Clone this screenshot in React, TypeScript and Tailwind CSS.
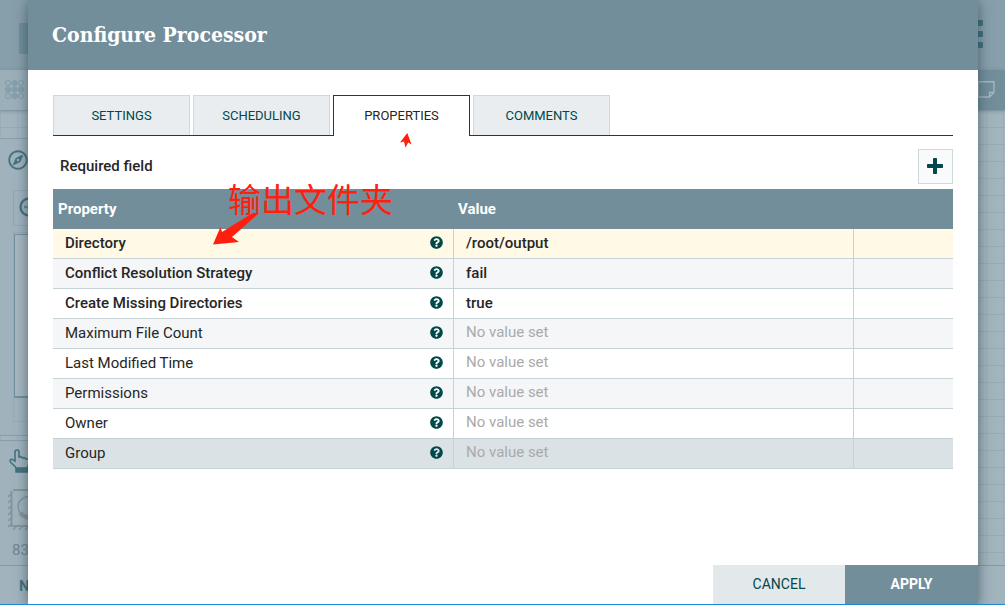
import { FaQuestionCircle, FaRegCompass } from "react-icons/fa";

type Property = { name: string; value?: string; required?: boolean; tone: string };

const properties: Property[] = [
  { name: "Directory", value: "/root/output", required: true, tone: "bg-[#fff9e5]" },
  { name: "Conflict Resolution Strategy", value: "fail", required: true, tone: "bg-[#f4f6f7]" },
  { name: "Create Missing Directories", value: "true", required: true, tone: "bg-white" },
  { name: "Maximum File Count", tone: "bg-[#f4f6f7]" },
  { name: "Last Modified Time", tone: "bg-white" },
  { name: "Permissions", tone: "bg-[#f4f6f7]" },
  { name: "Owner", tone: "bg-white" },
  { name: "Group", tone: "bg-[#dbe2e5]" },
];

const tabs = ["SETTINGS", "SCHEDULING", "PROPERTIES", "COMMENTS"];

function Backdrop() {
  return (
    <div
      aria-hidden="true"
      className="absolute inset-0 isolate flex flex-col overflow-hidden bg-[#a2b4be]"
    >
      <div className="flex h-[70px] shrink-0 items-start justify-between bg-[#879fab] pl-[19px]">
        <div className="mt-[23px] h-[31px] w-8 bg-[#6f8e9b]" />
        <div className="mt-5 mr-[22px] flex flex-col gap-[5px]">
          <i className="h-[6px] w-[6px] rounded-[1px] bg-[#42717d]" />
          <i className="h-[6px] w-[6px] rounded-[1px] bg-[#42717d]" />
          <i className="h-[6px] w-[6px] rounded-[1px] bg-[#42717d]" />
        </div>
      </div>
      <div className="z-10 flex h-10 shrink-0 justify-between shadow-[0_1px_4px_rgba(60,90,105,0.4)]">
        <div className="flex w-1/2 items-start bg-[#9bafb9] pt-[9px] pl-1">
          <svg width="21" height="21" viewBox="0 0 21 21" stroke="#839daa">
            {[4, 10.5, 17].map((y) =>
              [4, 10.5, 17].map((x) => (
                <circle
                  key={`${x}-${y}`}
                  cx={x}
                  cy={y}
                  r="2.6"
                  fill={x === 10.5 || y === 10.5 ? "#86a0ac" : "none"}
                />
              )),
            )}
          </svg>
        </div>
        <div className="flex w-1/2 items-start justify-end bg-[#728e9b] pt-[11px] pr-[10px]">
          <svg width="18" height="17" viewBox="0 0 18 17" fill="none" stroke="#a6b7c0" strokeWidth="1.4">
            <path d="M1 .8H17V11.5L12.5 16H1ZM17 11.5H12.5V16" />
          </svg>
        </div>
      </div>
      <div className="flex min-h-0 flex-1 flex-col bg-[linear-gradient(#97abb5_1px,transparent_1px),linear-gradient(90deg,#9aaeb8_1px,transparent_1px)] bg-[size:17px_17px]">
        <div className="mt-7 h-[298px] w-72 shrink-0 border-y border-[#879faa] bg-[#a0b3bd] pt-[11px]">
          <FaRegCompass size={20} color="#43737f" className="ml-2" />
          <div className="mt-5 ml-[13px] flex h-9 w-9 items-center border border-[#90a7b2] pl-1">
            <svg width="22" height="22" viewBox="0 0 22 22" fill="none" stroke="#43737f" strokeWidth="2.4">
              <circle cx="11" cy="10" r="8.5" />
              <path d="M6 10h10M11 5v10" stroke="#6f858f" />
            </svg>
          </div>
          <div className="mt-[6px] ml-[13px] h-[190px] border border-[#96abb5]">
            <div className="mt-px h-[164px] border border-b-2 border-[#6f929f] bg-[#a6b7c0]" />
          </div>
        </div>
        <div className="mt-1 min-h-0 w-72 flex-1 border-t border-[#879faa] bg-[#a0b3bd] pt-2">
          <svg className="ml-[9px]" width="21" height="24" viewBox="0 0 21 24" fill="none" stroke="#43737f" strokeWidth="1.6">
            <path d="M7 19C6 16 1 14 1 12Q1 10 3.500 10.500L6 12V3Q6 1 8 1Q10 1 10 3V8Q12 7 13.500 9Q15.500 8 17 10Q20 9 20 12Q20 16 18 19" />
            <path d="M7 19H20V23H7Z" fill="#43737f" />
          </svg>
          <svg className="mt-4 ml-2" width="40" height="41" viewBox="0 0 40 41" fill="none" stroke="#84959e">
            <path d="M5 1H39M3.500 2V37H39" strokeWidth="2" />
            <path d="M0 8l3-3M0 14l3-3M0 20l3-3M0 26l3-3M0 32l3-3M0 38l3-3M5 41l3-3M11 41l3-3M17 41l3-3" strokeWidth="1.6" />
            <path d="M22 7Q10 9 10 18Q11 27 22 30" strokeWidth="1.4" />
            <path d="M12 24Q16 28 22 29" strokeWidth="4" />
          </svg>
          <div className="mt-[10px] ml-3 text-[15px] leading-5 text-[#72858f]">83</div>
        </div>
      </div>
      <div className="h-10 shrink-0 border-t border-[#8299a4] bg-[#a1b3bd] pl-[19px] text-[15px] leading-10 font-bold text-[#43737f]">
        N
      </div>
    </div>
  );
}

function Annotations() {
  return (
    <>
      <div className="pointer-events-none absolute top-[178px] left-[200px] font-['Noto_Sans_CJK_SC',sans-serif] text-[33px] leading-10 font-normal whitespace-nowrap text-[#ff1f0f]">
        输出文件夹
      </div>
      <svg
        className="pointer-events-none absolute top-[212px] left-[184px]"
        width="52"
        height="34"
        viewBox="0 0 52 34"
        fill="#ff1f0f"
        aria-hidden="true"
      >
        <path d="M1 32.5L8.5 15L10 20L39 2L47 1Q34 13 20 25L27 30Z" />
      </svg>
      <svg
        className="pointer-events-none absolute top-[133px] left-[372px]"
        width="12"
        height="15"
        viewBox="0 0 12 15"
        fill="#ff1f0f"
        aria-hidden="true"
      >
        <path d="M7.3 0L0 9.5L4 8.5L5.5 14.5L8.2 9.5L11.5 11.5Z" />
      </svg>
    </>
  );
}

export default function App() {
  return (
    <div className="relative flex min-h-screen flex-col font-['Roboto',sans-serif]">
      <Backdrop />
      <main
        role="dialog"
        aria-labelledby="dialog-title"
        className="relative mr-[27px] ml-7 flex flex-1 flex-col bg-white shadow-[0_2px_12px_rgba(30,50,60,0.6)]"
      >
        <header className="flex h-[70px] items-center bg-[#728e9b] px-6">
          <h1
            id="dialog-title"
            className="font-['Roboto_Slab','DejaVu_Serif_Condensed','DejaVu_Serif',serif] text-[21px] leading-8 font-bold text-white"
          >
            Configure Processor
          </h1>
        </header>

        <div className="flex-1 px-[25px] pt-[25px]">
          <div role="tablist" className="flex items-start gap-[3px] border-b border-[#004849]">
            {tabs.map((tab) => {
              const active = tab === "PROPERTIES";
              return (
                <button
                  key={tab}
                  type="button"
                  role="tab"
                  aria-selected={active}
                  className={
                    active
                      ? "-mb-px h-[41px] w-[137px] border border-b-0 border-[#004849] bg-white text-[13px] font-normal text-[#262626]"
                      : "h-10 w-[137px] border border-b-0 border-[#ccdadb] bg-[#e9edf0] text-[13px] font-normal text-[#004849]"
                  }
                >
                  {tab}
                </button>
              );
            })}
          </div>

          <div className="mt-[13px] flex items-center justify-between pl-[7px]">
            <span className="pb-[2px] text-[15px] leading-5 font-medium text-[#262626]">
              Required field
            </span>
            <button
              type="button"
              aria-label="Add property"
              className="flex size-[35px] items-center justify-center border border-[#ccdadb] bg-[#f9fafb] pr-px pb-px"
            >
              <svg width="16" height="16" viewBox="0 0 16 16" fill="#004849" aria-hidden="true">
                <rect x="6" width="4" height="16" rx="0.8" />
                <rect y="6" width="16" height="4" rx="0.8" />
              </svg>
            </button>
          </div>

          <table className="mt-[5px] w-full table-fixed border-separate border-spacing-0 text-left text-[15px] leading-5 text-[#262626]">
            <colgroup>
              <col className="w-4/9" />
              <col className="w-4/9" />
              <col className="w-1/9" />
            </colgroup>
            <thead>
              <tr className="h-10 bg-[#728e9b] text-white">
                <th className="px-[5px] font-bold">Property</th>
                <th className="px-[5px] font-bold">Value</th>
                <th />
              </tr>
            </thead>
            <tbody>
              {properties.map((p) => (
                <tr key={p.name} className={p.tone}>
                  <td className="h-[30px] border-b border-[#c7d2d7] p-0 pr-[10px] pb-[2px] pl-3">
                    <div className="flex items-center justify-between">
                      <span className={p.required ? "font-medium" : "font-normal"}>{p.name}</span>
                      <FaQuestionCircle size={13} color="#004849" />
                    </div>
                  </td>
                  <td className="h-[30px] border-b border-l border-[#c7d2d7] p-0 pb-[2px] pl-3">
                    {p.value ? (
                      <span className="block font-medium">{p.value}</span>
                    ) : (
                      <span className="block pb-[2px] text-[#aaaaaa]">No value set</span>
                    )}
                  </td>
                  <td className="h-[30px] border-b border-l border-[#c7d2d7] p-0" />
                </tr>
              ))}
            </tbody>
          </table>
        </div>

        <footer className="flex h-[39px] justify-end text-[14px]">
          <button type="button" className="w-[132px] bg-[#e3e8eb] font-normal text-[#004849]">
            CANCEL
          </button>
          <button type="button" className="w-[133px] bg-[#728e9b] font-bold text-white">
            APPLY
          </button>
        </footer>
        <Annotations />
      </main>
      <div className="relative h-px bg-[#1b87d6]" />
    </div>
  );
}
